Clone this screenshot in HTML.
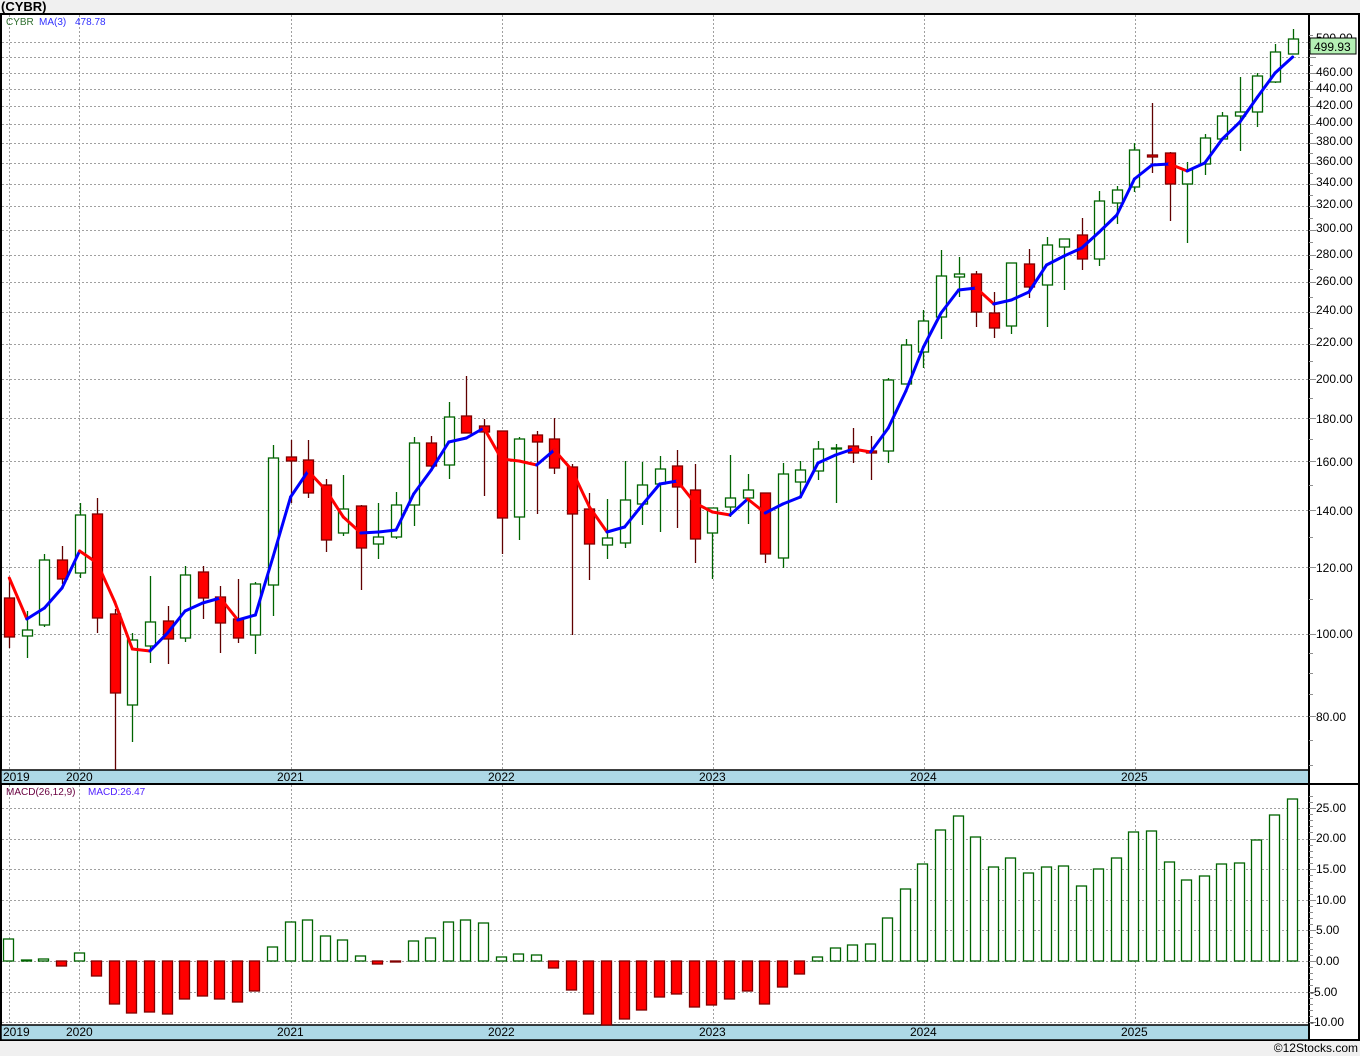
<!DOCTYPE html>
<html><head><meta charset="utf-8"><style>
html,body{margin:0;padding:0;background:#f0f0f0;width:1360px;height:1056px;overflow:hidden;font-family:"Liberation Sans",sans-serif}
svg{position:absolute;left:0;top:0}
</style></head><body>
<svg id="s" width="1360" height="1056" xmlns="http://www.w3.org/2000/svg" font-family="Liberation Sans, sans-serif">
<rect x="0" y="0" width="1360" height="1056" fill="#f0f0f0"/>
<text x="1" y="11" font-size="13" font-weight="bold" fill="#000">(CYBR)</text>
<rect x="1" y="14" width="1358" height="1026" fill="#fff" stroke="#000" stroke-width="2"/>
<g id="grid"></g>
<rect x="1" y="770" width="1308" height="14" fill="#add8e6" stroke="#000" stroke-width="1.5"/>
<rect x="1" y="1025" width="1308" height="15" fill="#add8e6" stroke="#000" stroke-width="1.5"/>
<line x1="0" y1="784" x2="1360" y2="784" stroke="#000" stroke-width="2"/>
<line x1="1309" y1="14" x2="1309" y2="1040" stroke="#000" stroke-width="2"/>
<g id="ticks"></g>
<g id="cand"></g>
<g id="ma"></g>
<g id="macd"></g>
<g font-size="12" fill="#000">
<text x="3" y="781">2019</text><text x="66" y="781">2020</text><text x="277" y="781">2021</text><text x="488" y="781">2022</text><text x="699" y="781">2023</text><text x="910" y="781">2024</text><text x="1121" y="781">2025</text>
<text x="3" y="1036">2019</text><text x="66" y="1036">2020</text><text x="277" y="1036">2021</text><text x="488" y="1036">2022</text><text x="699" y="1036">2023</text><text x="910" y="1036">2024</text><text x="1121" y="1036">2025</text>
</g>
<g font-size="12" fill="#000" id="plab">
<text x="1316" y="42">500.00</text><text x="1316" y="76">460.00</text><text x="1316" y="92">440.00</text><text x="1316" y="109">420.00</text><text x="1316" y="126">400.00</text><text x="1316" y="145">380.00</text><text x="1316" y="165">360.00</text><text x="1316" y="186">340.00</text><text x="1316" y="208">320.00</text><text x="1316" y="232">300.00</text><text x="1316" y="258">280.00</text><text x="1316" y="285">260.00</text><text x="1316" y="314">240.00</text><text x="1316" y="346">220.00</text><text x="1316" y="383">200.00</text><text x="1316" y="423">180.00</text><text x="1316" y="466">160.00</text><text x="1316" y="515">140.00</text><text x="1316" y="572">120.00</text><text x="1316" y="638">100.00</text><text x="1316" y="721">80.00</text>
<text x="1316" y="812">25.00</text><text x="1316" y="842">20.00</text><text x="1316" y="873">15.00</text><text x="1316" y="904">10.00</text><text x="1316" y="934">5.00</text><text x="1316" y="965">0.00</text><text x="1310" y="996">-5.00</text><text x="1310" y="1026">-10.00</text>
</g>
<rect x="1310" y="38" width="46" height="16" fill="#b4f0b4" stroke="#000" stroke-width="1"/>
<text x="1314" y="51" font-size="12" fill="#000">499.93</text>
<text x="6" y="25" font-size="10" fill="#2f6f2f">CYBR</text>
<text x="39" y="25" font-size="10" fill="#3030ff">MA(3)</text>
<text x="75" y="25" font-size="10" fill="#3030ff">478.78</text>
<text x="6" y="795" font-size="10" fill="#6a0040">MACD(26,12,9)</text>
<text x="88" y="795" font-size="10" fill="#5020ff">MACD:26.47</text>
<text x="1358" y="1052" font-size="12" fill="#000" text-anchor="end">©12Stocks.com</text>
</svg>
<script>
var NS="http://www.w3.org/2000/svg";
function el(p,t,a){var e=document.createElementNS(NS,t);for(var k in a)e.setAttribute(k,a[k]);document.getElementById(p).appendChild(e);return e;}
function py(p){return 634-255*Math.log2(p/100);}
var prices=[80,100,120,140,160,180,200,220,240,260,280,300,320,340,360,380,400,420,440,460,480,500];
prices.forEach(function(p){var y=Math.round(py(p))+0.5;el("grid","line",{x1:2,y1:y,x2:1309,y2:y,stroke:"#a0a0a0","stroke-dasharray":"2,2"});el("ticks","line",{x1:1309,y1:y,x2:1316,y2:y,stroke:"#909090"});});
for(var p=70;p<=510;p+=(p<100?5:10)){var y=Math.round(py(p))+0.5;if(y>15&&y<770)el("ticks","line",{x1:1309,y1:y,x2:1313,y2:y,stroke:"#909090"});}
[25,20,15,10,5,0,-5,-10].forEach(function(v){var y=Math.round(961-6.12*v)+0.5;el("grid","line",{x1:2,y1:y,x2:1309,y2:y,stroke:"#a0a0a0","stroke-dasharray":"2,2"});el("ticks","line",{x1:1309,y1:y,x2:1316,y2:y,stroke:"#909090"});});
for(var v=-11;v<=27;v++){var y=Math.round(961-6.12*v)+0.5;if(y>786&&y<1024)el("ticks","line",{x1:1309,y1:y,x2:1313,y2:y,stroke:"#909090"});}
[9,79,291,502,713,924,1135].forEach(function(x){x+=0.5;el("grid","line",{x1:x,y1:15,x2:x,y2:770,stroke:"#a0a0a0","stroke-dasharray":"2,2"});el("grid","line",{x1:x,y1:785,x2:x,y2:1025,stroke:"#a0a0a0","stroke-dasharray":"2,2"});});
// candles: [bodyTop, bodyBot, wickHi, wickLo, r/g]
var C=[[598,637,580,648,'r'],[630,636,611,658,'g'],[560,625,554,627,'g'],[560,579,546,584,'r'],[515,573,503,578,'g'],[514,618,498,633,'r'],[614,693,609,770,'r'],[640,705,633,742,'g'],[622,646,576,663,'g'],[621,639,606,664,'r'],
[575,638,566,642,'g'],[572,598,566,619,'r'],[597,623,586,653,'r'],[619,638,579,643,'r'],[584,635,582,654,'g'],[458,585,445,616,'g'],[457,461,440,503,'r'],[460,493,440,498,'r'],[485,540,479,552,'r'],[509,533,475,536,'g'],
[506,548,505,590,'r'],[537,544,503,559,'g'],[505,537,492,539,'g'],[443,505,437,526,'g'],[443,466,436,470,'r'],[417,465,402,479,'g'],[416,433,376,433,'r'],[426,432,419,496,'r'],[431,518,431,554,'r'],[439,517,437,540,'g'],
[435,442,431,514,'r'],[439,468,418,474,'r'],[467,514,464,635,'r'],[509,544,493,580,'r'],[538,545,499,559,'g'],[500,543,461,548,'g'],[485,504,462,525,'g'],[469,484,456,532,'g'],[466,487,450,528,'r'],[490,539,464,563,'r'],
[508,533,508,579,'g'],[498,507,455,517,'g'],[490,498,474,524,'g'],[493,554,493,563,'r'],[474,558,463,568,'g'],[470,482,461,497,'g'],[449,471,441,480,'g'],[448,449,444,503,'g'],[446,453,428,463,'r'],[451,453,436,480,'r'],
[380,451,378,463,'g'],[345,384,339,384,'g'],[321,352,310,368,'g'],[276,317,250,339,'g'],[274,277,257,297,'g'],[274,312,271,327,'r'],[313,328,292,338,'r'],[263,326,263,334,'g'],[264,287,249,298,'r'],[245,285,237,327,'g'],
[239,247,239,290,'g'],[235,259,218,270,'r'],[201,259,191,266,'g'],[190,203,186,224,'g'],[150,187,143,192,'g'],[155,157,103,173,'r'],[153,184,152,221,'r'],[170,184,162,243,'g'],[138,164,134,175,'g'],[116,139,112,139,'g'],
[112,116,77,151,'g'],[76,112,73,127,'g'],[52,82,44,83,'g'],[39,54,29,54,'g']];
function cx(i){return 9.3+17.58*i;}
C.forEach(function(c,i){var x=Math.round(cx(i))+0.5;var r=c[4]=='r';
el("cand","line",{x1:x,y1:c[2],x2:x,y2:c[3],stroke:r?"#600000":"#006400","stroke-width":1.3});
el("cand","rect",{x:x-5,y:c[0],width:10,height:Math.max(1,c[1]-c[0]),fill:r?"#ff0000":"#fff",stroke:r?"#800000":"#006400","stroke-width":1.3});});
var M=[578,619,608,588,551,563,602,649,651,633,611,603,598,620,615,557,497,471,490,517,533,532,530,494,470,442,438,428,459,461,465,450,470,507,532,527,505,484,481,503,512,515,499,513,504,497,463,455,449,452,428,391,347,313,290,288,304,300,292,265,256,248,232,215,179,165,164,171,163,139,122,97,73,57];
for(var i=0;i<M.length-1;i++){el("ma","line",{x1:cx(i),y1:M[i],x2:cx(i+1),y2:M[i+1],stroke:M[i+1]>M[i]?"#ff0000":"#0000ff","stroke-width":3,"stroke-linecap":"round"});}
var B=[939,960,959,966,953,976,1004,1013,1012,1014,999,996,999,1002,991,947,922,920,936,940,956,964,962,941,938,922,920,923,957,954,955,968,990,1014,1025,1019,1010,997,994,1007,1005,999,991,1004,987,974,957,948,945,944,918,889,864,830,816,837,867,858,873,867,866,886,869,858,832,831,862,880,876,864,863,840,815,799];
B.forEach(function(b,i){var x=Math.round(cx(i))-5.5;var neg=b>961;
var y=neg?961:b, h=Math.max(1,Math.abs(b-961));
el("macd","rect",{x:x,y:y,width:10,height:h,fill:neg?"#ff0000":"#fff",stroke:neg?"#800000":"#006400","stroke-width":1.3});});
</script>
</body></html>
